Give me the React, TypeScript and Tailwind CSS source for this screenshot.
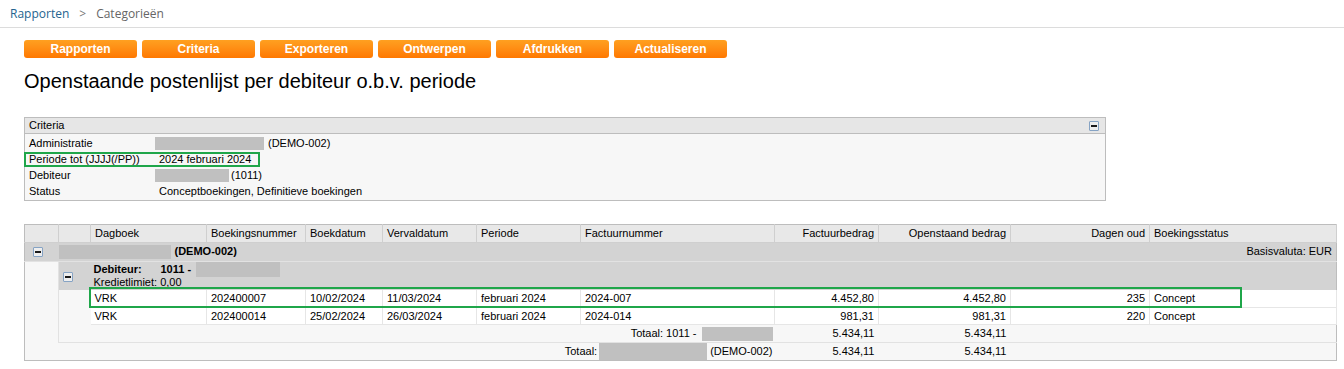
import type { FC } from "react";

const Redacted: FC<{ w: number; h?: number }> = ({ w, h = 14 }) => (
  <span className="inline-block align-middle bg-[#c0c0c0]" style={{ width: w, height: h }} />
);

const Collapse: FC = () => (
  <span className="inline-flex items-center justify-center w-[10px] h-[10px] border border-[#86a3c4] bg-[#eeeeee] rounded-[1px] align-middle">
    <span className="block w-[6px] h-[2px] bg-[#1a1a1a]" />
  </span>
);

const buttons = ["Rapporten", "Criteria", "Exporteren", "Ontwerpen", "Afdrukken", "Actualiseren"];

const criteria = [
  { label: "Administratie", value: <><Redacted w={109} h={13} /><span className="ml-1">(DEMO-002)</span></> },
  { label: "Periode tot (JJJJ(/PP))", value: <span className="ml-1">2024 februari 2024</span> },
  { label: "Debiteur", value: <><Redacted w={74} h={13} /><span className="ml-[2px]">(1011)</span></> },
  { label: "Status", value: <span className="ml-1">Conceptboekingen, Definitieve boekingen</span> },
];

const headers: { label: string; right?: boolean }[] = [
  { label: "Dagboek" },
  { label: "Boekingsnummer" },
  { label: "Boekdatum" },
  { label: "Vervaldatum" },
  { label: "Periode" },
  { label: "Factuurnummer" },
  { label: "Factuurbedrag", right: true },
  { label: "Openstaand bedrag", right: true },
  { label: "Dagen oud", right: true },
  { label: "Boekingsstatus" },
];

const widths = [34, 32, 116, 99, 77, 94, 104, 194, 104, 132, 139, 187];

const rows = [
  ["VRK", "202400007", "10/02/2024", "11/03/2024", "februari 2024", "2024-007", "4.452,80", "4.452,80", "235", "Concept"],
  ["VRK", "202400014", "25/02/2024", "26/03/2024", "februari 2024", "2024-014", "981,31", "981,31", "220", "Concept"],
];

const App: FC = () => {
  return (
    <div className="w-[1344px] h-[369px] bg-white overflow-hidden text-[11px] text-black font-['Liberation_Sans',Arial,sans-serif]">
      <div className="h-[28px] border-b border-[#dcdcdc] pl-[10px] flex items-center font-['Open_Sans',sans-serif] text-[12px]">
        <span className="text-[#24648f]">Rapporten</span>
        <span className="mx-[10px] text-[#777]">&gt;</span>
        <span className="text-[#666]">Categorieën</span>
      </div>

      <div className="px-6">
        <div className="mt-[12px] flex gap-[5px]">
          {buttons.map((b) => (
            <div
              key={b}
              className="w-[113px] h-[18px] rounded-[3px] bg-gradient-to-b from-[#ffa020] to-[#ff7800] text-white font-bold text-[12px] flex items-center justify-center"
            >
              {b}
            </div>
          ))}
        </div>

        <h1 className="mt-[11px] text-[20px] leading-[24px] font-normal">
          Openstaande postenlijst per debiteur o.b.v. periode
        </h1>

        <div className="relative mt-[24px] w-[1082px] border border-[#bdbdbd] bg-[#f7f7f7]">
          <div className="h-[16px] bg-[#e6e6e6] border-b border-[#bdbdbd] flex items-center justify-between pl-1 pr-[6px]">
            <span>Criteria</span>
            <Collapse />
          </div>
          <div className="pt-[1px] pb-[1px]">
            {criteria.map((c) => (
              <div key={c.label} className="h-[16px] flex items-center">
                <span className="w-[130px] pl-1">{c.label}</span>
                <span className="flex items-center">{c.value}</span>
              </div>
            ))}
          </div>
          <div className="absolute left-[-1px] top-[34px] w-[236px] h-[15px] border-2 border-[#1fa64a]" />
        </div>

        <div className="relative mt-[23px] w-[1312px]">
          <table className="table-fixed border-collapse w-[1312px] border border-[#bdbdbd]">
            <colgroup>
              {widths.map((w, i) => (
                <col key={i} style={{ width: w }} />
              ))}
            </colgroup>
            <tbody>
              <tr className="h-[16px] bg-[#e8e8e8]">
                <td className="border-b border-r border-[#cfcfcf]" />
                <td className="border-b border-r border-[#cfcfcf]" />
                {headers.map((h) => (
                  <td
                    key={h.label}
                    className={`px-1 py-0 border-b border-r border-[#cfcfcf] ${h.right ? "text-right" : ""}`}
                  >
                    {h.label}
                  </td>
                ))}
              </tr>

              <tr className="h-[19px] bg-[#d3d3d3]">
                <td className="pl-[8px] border-b border-[#e2e2e2]">
                  <Collapse />
                </td>
                <td colSpan={11} className="p-0 border-b border-[#e2e2e2]">
                  <div className="flex items-center justify-between pr-[4px]">
                    <div className="flex items-center font-bold">
                      <Redacted w={112} />
                      <span className="ml-[4px]">(DEMO-002)</span>
                    </div>
                    <span>Basisvaluta: EUR</span>
                  </div>
                </td>
              </tr>

              <tr className="h-[29px]">
                <td rowSpan={4} className="bg-[#f7f7f7] border-r border-[#e2e2e2]" />
                <td className="bg-[#d3d3d3] pl-[4px] align-middle">
                  <Collapse />
                </td>
                <td colSpan={10} className="bg-[#d3d3d3] pl-[3px] py-0 align-top">
                  <div className="flex items-center h-[15px] font-bold">
                    <span className="w-[67px]">Debiteur:</span>
                    <span>1011 -</span>
                    <span className="ml-[5px]"><Redacted w={84} h={15} /></span>
                  </div>
                  <div className="leading-[11px] h-[12px]">Kredietlimiet: 0,00</div>
                </td>
              </tr>

              {rows.map((r, i) => (
                <tr key={i} className="h-[17px]">
                  {i === 0 && <td rowSpan={2} className="bg-[#f7f7f7]" />}
                  {r.map((v, j) => (
                    <td
                      key={j}
                      className={`bg-white px-1 py-0 border-r border-b border-[#e6e6e6] ${
                        headers[j].right ? "text-right" : ""
                      }`}
                    >
                      {v}
                    </td>
                  ))}
                </tr>
              ))}

              <tr className="h-[17px] bg-[#f7f7f7]">
                <td colSpan={7} className="text-right pr-[2px] border-b border-[#e2e2e2]">
                  <span className="inline-flex items-center">
                    Totaal: 1011 -<span className="ml-[5px]"><Redacted w={71} /></span>
                  </span>
                </td>
                <td className="text-right px-1 border-b border-[#e2e2e2]">5.434,11</td>
                <td className="text-right px-1 border-b border-[#e2e2e2]">5.434,11</td>
                <td colSpan={2} className="border-b border-[#e2e2e2]" />
              </tr>

              <tr className="h-[17px] bg-[#f7f7f7]">
                <td colSpan={8} className="text-right pr-[2px]">
                  <span className="inline-flex items-center">
                    Totaal:<span className="ml-[2px]"><Redacted w={108} h={17} /></span>
                    <span className="ml-[3px]">(DEMO-002)</span>
                  </span>
                </td>
                <td className="text-right px-1">5.434,11</td>
                <td className="text-right px-1">5.434,11</td>
                <td colSpan={2} />
              </tr>
            </tbody>
          </table>
          <div className="absolute left-[65px] top-[63px] w-[1153px] h-[21px] border-2 border-[#1fa64a]" />
        </div>
      </div>
    </div>
  );
};

export default App;
